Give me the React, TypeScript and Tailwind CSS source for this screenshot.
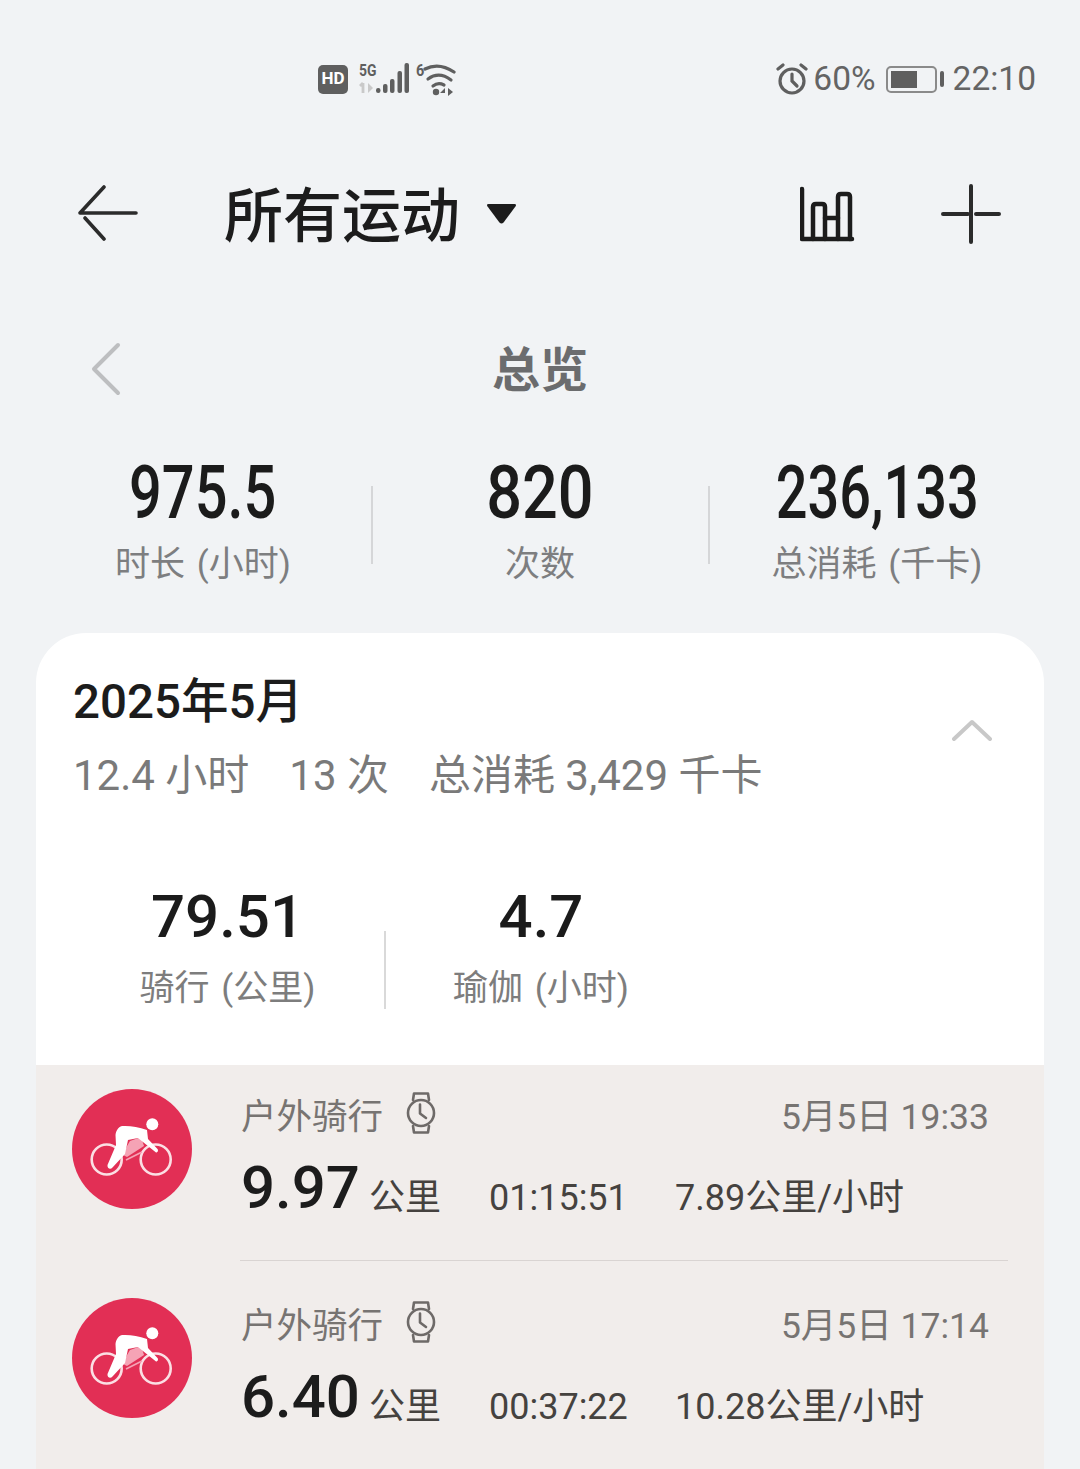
import React from 'react';

const FONT = 'font-["Roboto","Noto_Sans_CJK_SC",sans-serif]';

const CyclingBadge = () => (
  <svg width="120" height="120" viewBox="0 0 120 120" className="shrink-0">
    <circle cx="60" cy="60" r="60" fill="#e22f55" />
    <circle cx="34.7" cy="70.5" r="15" fill="none" stroke="#fbdfe4" strokeWidth="2.6" />
    <circle cx="83.7" cy="70.5" r="15" fill="none" stroke="#fbdfe4" strokeWidth="2.6" />
    <path d="M55 57 L58 52 L69 48 L72 57 L55 68 L51 66 Z" fill="#f5a3b5" />
    <path d="M54 71 L70 63" stroke="#f5a3b5" strokeWidth="1.6" fill="none" />
    <circle cx="80.3" cy="35.3" r="6" fill="#fff" />
    <path d="M50 37 C46 38 44 42 43.5 46 L44 56 L35.5 76 C35 79.5 38.5 81 40.5 78.5 L53 65 L56 51 L66 49 L84 63.5 C86 63.5 86.5 61 85.5 60 L76 50 L75 41 C66 38 58 36.5 50 37 Z" fill="#fff" />
  </svg>
);

const WatchIcon = () => (
  <svg width="30" height="44" viewBox="0 0 30 44" className="mb-[6px]" fill="none" stroke="#6e6a68" strokeWidth="2.6" strokeLinejoin="round" strokeLinecap="round">
    <path d="M7 9 L8 2.5 H22 L23 9" />
    <path d="M7 35 L8 41.5 H22 L23 35" />
    <circle cx="15" cy="22" r="13" />
    <path d="M14 13.5 V22.5 L20 27" />
  </svg>
);

const Workout = ({ time, km, duration, pace, last }: { time: string; km: string; duration: string; pace: string; last?: boolean }) => (
  <div className="relative flex bg-[#f1edeb] pl-[36px] pr-[55px] pt-[24px] h-[196px]">
    <CyclingBadge />
    <div className="ml-[49px] flex-1 min-w-0">
      <div className="flex items-center justify-between h-[54px]">
        <div className="flex items-center text-[35.5px] text-[#777472]">
          <span className="w-[165px] mt-[4px]">户外骑行</span>
          <WatchIcon />
        </div>
        <span className="text-[35.5px] mt-[4px] text-[#777472]">{time}</span>
      </div>
      <div className="flex items-end mt-[9px] text-[36px] leading-[46px] text-[#45423f]">
        <span className="w-[128px] text-[60px] leading-[72px] font-medium text-[#1c1c1c]">{km}</span>
        <span className="w-[120px] mb-[3px]">公里</span>
        <span className="w-[186px] mb-[3px]">{duration}</span>
        <span className="mb-[3px]">{pace}</span>
      </div>
    </div>
    {!last && <div className="absolute left-[204px] right-[36px] bottom-0 h-px bg-[#d9d4d2]" />}
  </div>
);

const Stat = ({ value, label, squeeze }: { value: string; label: string; squeeze: string }) => (
  <div className="flex flex-col items-center w-[337px]">
    <span className={`text-[75px] leading-[84px] font-medium text-[#1b1b1b] ${squeeze}`}>{value}</span>
    <span className="text-[35px] leading-[46px] [word-spacing:3px] text-[#7d7e80] mt-[8px]">{label}</span>
  </div>
);

export default function App() {
  return (
    <div className={`${FONT} w-[1080px] h-[1469px] overflow-hidden bg-[#f1f3f5]`}>
      {/* status bar */}
      <div className="flex items-center h-[158px] pl-[318px] pr-[44px] text-[#646464]">
        <div className="flex items-center justify-center w-[30px] h-[29px] rounded-[5px] bg-[#5f5f5f] text-white text-[17px] font-bold">HD</div>
        <svg width="97" height="42" viewBox="0 -4 97 42" className="ml-[11px]" fill="#5f5f5f">
          <text transform="scale(0.82 1)" x="0" y="13.5" fontSize="17" fontWeight="700" fontFamily="Roboto">5G</text>
          <path d="M4 21 V31 M1 24 L4 21" stroke="#c9c9c9" strokeWidth="2.8" fill="none" />
          <path d="M9 21 V31 L14 26 Z" fill="#c9c9c9" />
          <rect x="17" y="26" width="4.5" height="5" rx="2.2" />
          <rect x="24" y="22" width="4.5" height="9" rx="2" />
          <rect x="31" y="17" width="4.5" height="14" rx="2" />
          <rect x="38.5" y="9" width="4.5" height="22" rx="2" />
          <rect x="45.5" y="1" width="4.5" height="30" rx="2" />
          <text transform="translate(57 0) scale(0.85 1)" x="0" y="13.5" fontSize="17" fontWeight="700" fontFamily="Roboto">6</text>
          <g fill="none" stroke="#5f5f5f" strokeWidth="3.2" strokeLinecap="round">
            <path d="M66 7 Q80 0 95 10" />
            <path d="M69 17 Q80 9 92 18" />
            <path d="M74 24 Q79 20 85 23" />
          </g>
          <circle cx="77" cy="30" r="3.2" />
          <path d="M86 26 L81 31 H86 Z M89 26 V34 L94 30 Z" />
        </svg>
        <div className="ml-auto flex items-center">
          <svg width="32" height="32" viewBox="0 0 32 32" className="-ml-[1px]" fill="none" stroke="#5f5f5f" strokeWidth="3.2" strokeLinecap="round">
            <circle cx="16" cy="18" r="12" />
            <path d="M16 11 V18 L21 23" />
            <path d="M2 6 L7 2 M30 6 L25 2" />
          </svg>
          <span className="ml-[5px] text-[33.5px]">60%</span>
          <div className="ml-[10px] flex items-center">
            <div className="w-[51px] h-[27px] rounded-[5px] border-2 border-[#8a8a8a] p-[3px]">
              <div className="w-[26px] h-full bg-[#5f5f5f]" />
            </div>
            <div className="ml-[3px] w-[4px] h-[16px] rounded-[2px] bg-[#5f5f5f]" />
          </div>
          <span className="ml-[9px] text-[33.5px]">22:10</span>
        </div>
      </div>

      {/* title bar */}
      <div className="flex items-center h-[112px] pl-[78px] text-[#1c1c1c]">
        <svg width="60" height="56" viewBox="0 0 60 56" className="mb-[2px]" fill="none" stroke="#2b2b2b" strokeWidth="3.6" strokeLinecap="round" strokeLinejoin="round">
          <path d="M58 28 H2 L26 2 M7 33 L26 54" />
        </svg>
        <span className="ml-[86px] pt-[5px] text-[59px] font-medium leading-none">所有运动</span>
        <svg width="31" height="20" viewBox="0 0 30 20" preserveAspectRatio="none" className="ml-[26px]" fill="#1c1c1c">
          <path d="M2.5 0 H27.5 Q30 0 28.5 2.5 L17 18.5 Q15 20.5 13 18.5 L1.5 2.5 Q0 0 2.5 0 Z" />
        </svg>
        <svg width="56" height="56" viewBox="0 0 56 56" className="ml-[283px]" fill="none" stroke="#1c1c1c" strokeWidth="4.5" strokeLinecap="round" strokeLinejoin="round">
          <path d="M2 3 V53 H52" />
          <path d="M13 53 V21 Q13 18 16 18 H22 Q25 18 25 21 V53" />
          <path d="M25 32 H38" />
          <path d="M38 53 V11 Q38 8 41 8 H47 Q50 8 50 11 V53" />
        </svg>
        <svg width="60" height="60" viewBox="0 0 60 60" className="ml-[85px]" fill="none" stroke="#2b2b2b" strokeWidth="4" strokeLinecap="round">
          <path d="M30 2 V58 M2 30 H27 M35 30 H58" />
        </svg>
      </div>

      {/* overview heading */}
      <div className="relative flex items-center justify-center h-[80px] mt-[60px] pt-[2px] text-[48px] font-bold leading-none text-[#6b6c6e]">
        <svg width="30" height="54" viewBox="0 0 30 54" className="absolute left-[91px] top-[12px]" fill="none" stroke="#bdbec0" strokeWidth="4" strokeLinecap="round" strokeLinejoin="round">
          <path d="M27 3 L3 27 L27 51" />
        </svg>
        总览
      </div>

      {/* totals */}
      <div className="flex justify-center mt-[40px] h-[183px]">
        <Stat value="975.5" label="时长 (小时)" squeeze="scale-x-[0.77]" />
        <div className="self-start mt-[36px] w-[2px] h-[78px] bg-[#d5d6d8] -mx-px" />
        <Stat value="820" label="次数" squeeze="scale-x-[0.84]" />
        <div className="self-start mt-[36px] w-[2px] h-[78px] bg-[#d5d6d8] -mx-px" />
        <Stat value="236,133" label="总消耗 (千卡)" squeeze="scale-x-[0.745]" />
      </div>

      {/* month card */}
      <div className="mx-[36px] rounded-t-[50px] bg-white overflow-hidden">
        <div className="relative pl-[37px] pt-[40px]">
          <div className="text-[47.5px] leading-[58px] font-medium text-[#1c1c1c]">2025年5月</div>
          <div className="flex mt-[17px] text-[42px] leading-[56px] text-[#7a7a7a] gap-[40px]">
            <span>12.4 小时</span>
            <span>13 次</span>
            <span>总消耗 3,429 千卡</span>
          </div>
          <svg width="40" height="22" viewBox="0 0 40 22" className="absolute right-[52px] top-[86px]" fill="none" stroke="#c8c8c8" strokeWidth="4" strokeLinecap="round" strokeLinejoin="round">
            <path d="M2 20 L20 3 L38 20" />
          </svg>
        </div>
        <div className="flex items-end h-[261px] pb-[53px]">
          <div className="flex flex-col items-center w-[348px] pl-[35px]">
            <span className="text-[60px] leading-[70px] font-medium text-[#1b1b1b]">79.51</span>
            <span className="mt-[14px] text-[35px] leading-[46px] [word-spacing:3px] text-[#7d7d7d]">骑行 (公里)</span>
          </div>
          <div className="w-[2px] h-[78px] mb-[3px] bg-[#d9d9d9]" />
          <div className="flex flex-col items-center w-[310px]">
            <span className="text-[60px] leading-[70px] font-medium text-[#1b1b1b]">4.7</span>
            <span className="mt-[14px] text-[35px] leading-[46px] [word-spacing:3px] text-[#7d7d7d]">瑜伽 (小时)</span>
          </div>
        </div>
      </div>

      {/* workouts */}
      <div className="mx-[36px]">
        <Workout time="5月5日 19:33" km="9.97" duration="01:15:51" pace="7.89公里/小时" />
        <div className="h-[13px] bg-[#f1edeb]" />
        <Workout time="5月5日 17:14" km="6.40" duration="00:37:22" pace="10.28公里/小时" last />
      </div>
    </div>
  );
}
